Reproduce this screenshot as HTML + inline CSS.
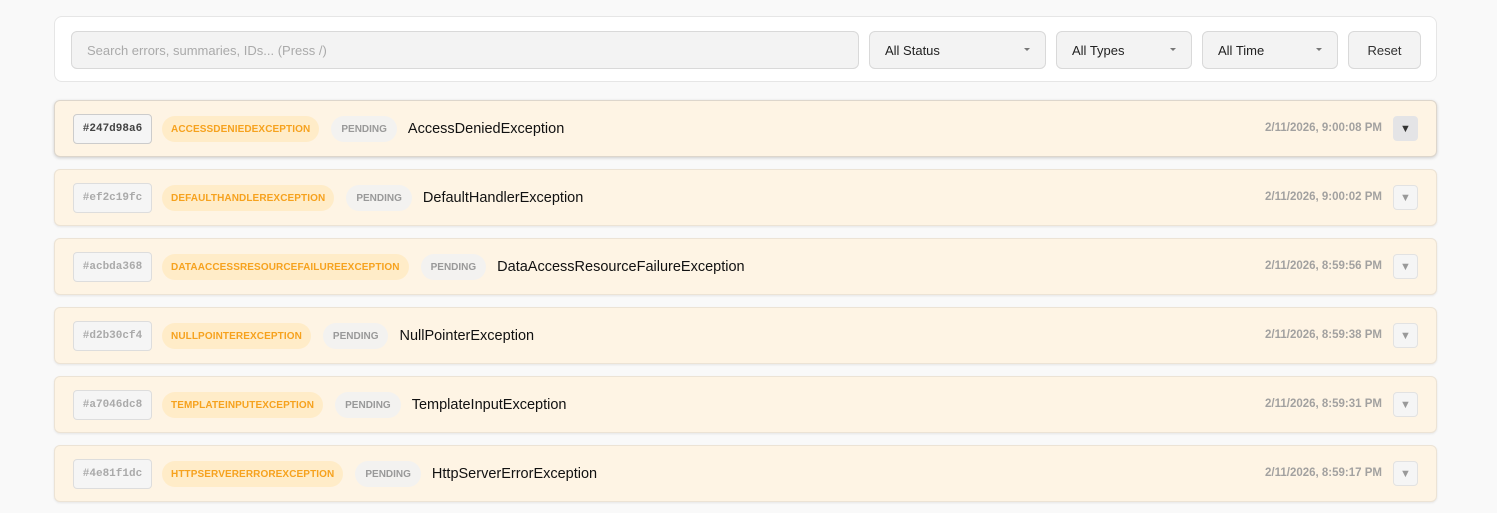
<!DOCTYPE html>
<html><head><meta charset="utf-8"><style>
*{box-sizing:border-box;margin:0;padding:0}
body{width:1497px;height:513px;background:#f9f9f9;font-family:"Liberation Sans",sans-serif;position:relative;overflow:hidden}
.card{position:absolute;left:54px;top:16px;width:1383px;height:66px;background:#fff;border:1px solid #e6e6e6;border-radius:8px}
.in{position:absolute;top:14px;height:38px;background:#f3f3f3;border:1px solid #d9d9d9;border-radius:6px;font-size:13px;color:#222;display:flex;align-items:center;padding-left:15px}
.in .c{position:absolute;right:15px;top:16px;width:0;height:0;border-left:3px solid transparent;border-right:3px solid transparent;border-top:3px solid #777}
.row{position:absolute;left:54px;width:1383px;height:57px;background:#fef4e4;border:1px solid #ece3d5;border-radius:6px;box-shadow:0 1px 2px rgba(0,0,0,.08)}
.row.a{box-shadow:0 1px 3px rgba(0,0,0,.18);border-color:#ddd6cc}
.id{position:absolute;left:18px;top:13px;width:79px;height:30px;border:1px solid #ddd;border-radius:4px;background:#f5f5f5;font-family:"Liberation Mono",monospace;font-size:11px;font-weight:bold;color:#aaa;display:flex;align-items:center;justify-content:center}
.a .id{color:#444;border-color:#ccc}
.line{position:absolute;left:107px;top:15px;height:26px;display:flex;align-items:center}
.ty{height:26px;border-radius:13px;background:#ffecc8;color:#f6a21e;font-weight:bold;font-size:10px;letter-spacing:.1px;padding:0 9px;display:flex;align-items:center}
.pe{height:26px;border-radius:13px;background:#f3f2f0;color:#999;font-weight:bold;font-size:10px;padding:0 10px;display:flex;align-items:center;margin-left:12px}
.ti{font-size:14.5px;color:#111;margin-left:11px}
.ts{position:absolute;right:54px;top:21px;font-size:11.5px;color:#999;font-weight:bold;opacity:.9}
.tg{position:absolute;right:18px;top:15px;width:25px;height:25px;border:1px solid #e2e2e2;border-radius:4px;background:#f5f5f5;color:#999;font-size:11px;display:flex;align-items:center;justify-content:center}
.a .tg{background:#e4e4e6;color:#333;border-color:#e4e4e6}
</style></head><body>
<div class="card">
<div class="in" style="left:16px;width:788px;color:#aaa">Search errors, summaries, IDs... (Press /)</div>
<div class="in" style="left:814px;width:177px">All Status<span class="c"></span></div>
<div class="in" style="left:1001px;width:136px">All Types<span class="c"></span></div>
<div class="in" style="left:1147px;width:136px">All Time<span class="c"></span></div>
<div class="in" style="left:1293px;width:73px;padding:0;justify-content:center;color:#333">Reset</div>
</div>

<div class="row a" style="top:100px"><div class="id">#247d98a6</div><div class="line"><span class="ty">ACCESSDENIEDEXCEPTION</span><span class="pe">PENDING</span><span class="ti">AccessDeniedException</span></div><div class="ts">2/11/2026, 9:00:08 PM</div><div class="tg">▼</div></div>
<div class="row" style="top:169px"><div class="id">#ef2c19fc</div><div class="line"><span class="ty">DEFAULTHANDLEREXCEPTION</span><span class="pe">PENDING</span><span class="ti">DefaultHandlerException</span></div><div class="ts">2/11/2026, 9:00:02 PM</div><div class="tg">▼</div></div>
<div class="row" style="top:238px"><div class="id">#acbda368</div><div class="line"><span class="ty">DATAACCESSRESOURCEFAILUREEXCEPTION</span><span class="pe">PENDING</span><span class="ti">DataAccessResourceFailureException</span></div><div class="ts">2/11/2026, 8:59:56 PM</div><div class="tg">▼</div></div>
<div class="row" style="top:307px"><div class="id">#d2b30cf4</div><div class="line"><span class="ty">NULLPOINTEREXCEPTION</span><span class="pe">PENDING</span><span class="ti">NullPointerException</span></div><div class="ts">2/11/2026, 8:59:38 PM</div><div class="tg">▼</div></div>
<div class="row" style="top:376px"><div class="id">#a7046dc8</div><div class="line"><span class="ty">TEMPLATEINPUTEXCEPTION</span><span class="pe">PENDING</span><span class="ti">TemplateInputException</span></div><div class="ts">2/11/2026, 8:59:31 PM</div><div class="tg">▼</div></div>
<div class="row" style="top:445px"><div class="id">#4e81f1dc</div><div class="line"><span class="ty">HTTPSERVERERROREXCEPTION</span><span class="pe">PENDING</span><span class="ti">HttpServerErrorException</span></div><div class="ts">2/11/2026, 8:59:17 PM</div><div class="tg">▼</div></div>
</body></html>
